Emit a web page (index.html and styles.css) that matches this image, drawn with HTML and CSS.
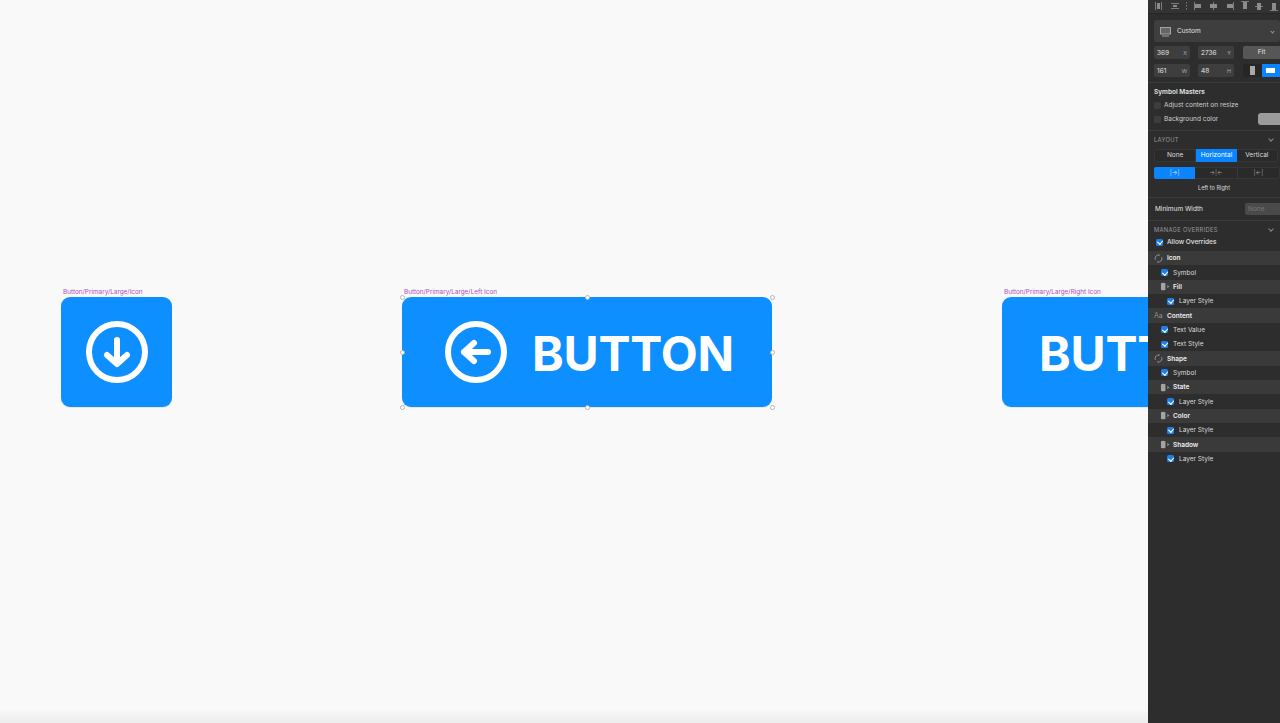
FILE: index.html
```html
<!DOCTYPE html>
<html>

<head>
    <title>Button Symbols</title>
    <meta name="viewport" content="width=device-width, initial-scale=1">
    <link rel="stylesheet" href="styles.css">
</head>

<body>
    <svg class="defs" width="0" height="0">
        <symbol id="sync" viewBox="0 0 10 10">
            <path d="M1.500 6.500A4 4 0 0 1 4 1.200M8.500 3.500A4 4 0 0 1 6 8.800" fill="none" stroke="#9a9a9a" stroke-width="1"/>
            <path d="M6 0L6 2.500L3.800 1.200ZM4 10L4 7.500L6.200 8.800Z" fill="#9a9a9a"/>
        </symbol>
        <symbol id="style" viewBox="0 0 11 10">
            <path d="M1 1.500Q3.500 0 6 1.500V8.500Q3.500 10 1 8.500Z" fill="#a4a4a4"/>
            <path d="M8 3L10.500 5L8 7Z" fill="#8a8a8a"/>
        </symbol>
    </svg>

    <div class="app">
        <div class="canvas">
            <div class="artboard-label label-icon">Button/Primary/Large/Icon</div>
            <div class="btn btn-icon">
                <svg class="circle-icon" viewBox="0 0 62 62">
                    <circle cx="31" cy="31" r="28" fill="none" stroke="#fff" stroke-width="6"/>
                    <path d="M31 19V42M21 34L31 43L41 34" fill="none" stroke="#fff" stroke-width="6" stroke-linecap="round" stroke-linejoin="round"/>
                </svg>
            </div>

            <div class="artboard-label label-left">Button/Primary/Large/Left Icon</div>
            <div class="btn btn-left">
                <svg class="circle-icon" viewBox="0 0 62 62">
                    <circle cx="31" cy="31" r="28" fill="none" stroke="#fff" stroke-width="6"/>
                    <path d="M43 31H19M29 22L19 31L29 40" fill="none" stroke="#fff" stroke-width="6" stroke-linecap="round" stroke-linejoin="round"/>
                </svg>
                <span class="btn-text">BUTTON</span>
            </div>
            <span class="handle h1"></span><span class="handle h2"></span><span class="handle h3"></span><span class="handle h4"></span>
            <span class="handle h5"></span><span class="handle h6"></span><span class="handle h7"></span><span class="handle h8"></span>

            <div class="artboard-label label-right">Button/Primary/Large/Right Icon</div>
            <div class="btn btn-right">
                <span class="btn-text">BUTTON</span>
            </div>
            <div class="canvas-fade"></div>
        </div>

        <div class="inspector">
            <div class="align-bar">
                <svg width="132" height="13" viewBox="0 0 132 13">
                    <g fill="none" stroke="#7c7c7c" stroke-width="1">
                        <path d="M7.500 2V10M13.500 2V10"/>
                        <path d="M23 3.500H31M23 8.500H31"/>
                        <path d="M38.500 2V10" stroke-dasharray="1.500 1.500"/>
                        <path d="M46.500 2V10"/>
                        <path d="M65.500 2V10"/>
                        <path d="M85.500 2V10"/>
                        <path d="M93 1.500H101"/>
                        <path d="M107 6.500H115"/>
                        <path d="M122 10.500H130"/>
                    </g>
                    <g fill="#8c8c8c">
                        <rect x="9" y="3" width="3" height="6"/>
                        <rect x="25" y="5" width="4" height="2"/>
                        <rect x="47" y="4" width="6" height="4"/>
                        <rect x="62" y="4" width="7" height="4"/>
                        <rect x="79" y="4" width="6" height="4"/>
                        <rect x="95" y="2" width="4" height="7"/>
                        <rect x="109" y="3" width="4" height="7"/>
                        <rect x="124" y="3" width="4" height="7"/>
                    </g>
                </svg>
            </div>

            <div class="preset">
                <svg class="preset-icon" width="13" height="11" viewBox="0 0 13 11">
                    <rect x="1.500" y="1.500" width="10" height="6.500" fill="#666" stroke="#a4a4a4"/>
                    <path d="M3 10H10" stroke="#a4a4a4"/>
                </svg>
                <span>Custom</span>
                <span class="chev"></span>
            </div>

            <div class="field-row">
                <div class="field"><span>369</span><small>X</small></div>
                <div class="field"><span>2736</span><small>Y</small></div>
                <div class="fit">Fit</div>
            </div>
            <div class="field-row">
                <div class="field"><span>161</span><small>W</small></div>
                <div class="field"><span>48</span><small>H</small></div>
                <div class="orient">
                    <div class="orient-item"><i class="portrait"></i></div>
                    <div class="orient-item on"><i class="landscape"></i></div>
                </div>
            </div>

            <div class="section masters">
                <div class="section-title">Symbol Masters</div>
                <div class="check-line"><span class="box"></span>Adjust content on resize</div>
                <div class="check-line"><span class="box"></span>Background color<span class="swatch"></span></div>
            </div>

            <div class="section layout">
                <div class="heading">LAYOUT<span class="caret"></span></div>
                <div class="segments">
                    <div class="seg">None</div>
                    <div class="seg on">Horizontal</div>
                    <div class="seg">Vertical</div>
                </div>
                <div class="segments dirs">
                    <div class="seg on">|&#8594;|</div>
                    <div class="seg">&#8594;|&#8592;</div>
                    <div class="seg">|&#8592;|</div>
                </div>
                <div class="seg-caption">Left to Right</div>
            </div>

            <div class="section min-width">
                <span>Minimum Width</span>
                <div class="min-input">None</div>
            </div>

            <div class="overrides">
                <div class="heading">MANAGE OVERRIDES<span class="caret"></span></div>
                <div class="allow"><span class="tick"></span>Allow Overrides</div>
                <div class="tree">
                    <div class="row head"><svg class="ico"><use href="#sync"/></svg>Icon</div>
                    <div class="row lvl1"><span class="tick"></span>Symbol</div>
                    <div class="row head sub"><svg class="ico"><use href="#style"/></svg>Fill</div>
                    <div class="row lvl2"><span class="tick"></span>Layer Style</div>
                    <div class="row head"><span class="aa">Aa</span>Content</div>
                    <div class="row lvl1"><span class="tick"></span>Text Value</div>
                    <div class="row lvl1"><span class="tick"></span>Text Style</div>
                    <div class="row head"><svg class="ico"><use href="#sync"/></svg>Shape</div>
                    <div class="row lvl1"><span class="tick"></span>Symbol</div>
                    <div class="row head sub"><svg class="ico"><use href="#style"/></svg>State</div>
                    <div class="row lvl2"><span class="tick"></span>Layer Style</div>
                    <div class="row head sub"><svg class="ico"><use href="#style"/></svg>Color</div>
                    <div class="row lvl2"><span class="tick"></span>Layer Style</div>
                    <div class="row head sub"><svg class="ico"><use href="#style"/></svg>Shadow</div>
                    <div class="row lvl2"><span class="tick"></span>Layer Style</div>
                </div>
            </div>
        </div>
    </div>
</body>

</html>
```

FILE: styles.css
```css
* {
    box-sizing: border-box;
}

body {
    font-family: "Inter", "Liberation Sans", sans-serif;
    margin: 0;
    padding: 0;
    overflow: hidden;
}

.defs {
    position: absolute;
}

.app {
    display: flex;
    width: 1280px;
    height: 723px;
    overflow: hidden;
}

/* Free canvas: artboards sit at their own coordinates */

.canvas {
    position: relative;
    flex: 1;
    background-color: #f9f9f9;
    overflow: hidden;
}

.canvas-fade {
    position: absolute;
    left: 0;
    right: 0;
    bottom: 0;
    height: 14px;
    background: linear-gradient(#f9f9f9, #ededed);
}

.artboard-label {
    position: absolute;
    top: 288px;
    font-size: 6.4px;
    line-height: 8px;
    color: #a94fc0;
    white-space: nowrap;
}

.label-icon {
    left: 63px;
}

.label-left {
    left: 404px;
}

.label-right {
    left: 1004px;
}

.btn {
    position: absolute;
    top: 297px;
    height: 110px;
    background-color: #0d8fff;
    border-radius: 9px;
    display: flex;
    align-items: center;
    box-shadow: 0 1px 1px rgba(0, 0, 0, 0.08);
}

.btn-icon {
    left: 61px;
    width: 111px;
    justify-content: center;
}

.btn-left {
    left: 402px;
    width: 370px;
    padding-left: 43px;
}

.btn-right {
    left: 1002px;
    width: 370px;
    padding-left: 37px;
}

.circle-icon {
    width: 62px;
    height: 62px;
    flex: none;
}

.btn-text {
    margin-top: 3px;
    font-size: 48px;
    font-weight: 700;
    line-height: 56px;
    color: #fff;
    letter-spacing: -0.2px;
}

.btn-left .btn-text {
    margin-left: 25px;
}

.handle {
    position: absolute;
    width: 5px;
    height: 5px;
    background-color: #fff;
    border: 1px solid #b5b5b5;
    border-radius: 50%;
}

.h1 { left: 400px; top: 295px; }
.h2 { left: 585px; top: 295px; }
.h3 { left: 770px; top: 295px; }
.h4 { left: 400px; top: 350px; }
.h5 { left: 770px; top: 350px; }
.h6 { left: 400px; top: 405px; }
.h7 { left: 585px; top: 405px; }
.h8 { left: 770px; top: 405px; }

/* Inspector */

.inspector {
    width: 132px;
    flex: none;
    height: 723px;
    background-color: #2d2d2d;
    color: #e4e4e4;
    font-size: 6.5px;
    line-height: 8px;
    overflow: hidden;
}

.align-bar {
    height: 14px;
    background-color: #333;
    border-bottom: 1px solid #262626;
}

.align-bar svg {
    display: block;
}

.preset {
    display: flex;
    align-items: center;
    height: 22px;
    margin: 6px 0 4px 6px;
    padding: 0 5px;
    background-color: #3e3e3e;
    border-radius: 3px;
}

.preset-icon {
    margin-right: 5px;
}

.chev {
    width: 3px;
    height: 3px;
    margin-left: auto;
    margin-right: 1px;
    border-right: 1px solid #999;
    border-bottom: 1px solid #999;
    transform: rotate(45deg);
}

.field-row {
    display: flex;
    align-items: center;
    height: 13px;
    margin: 0 0 5px 6px;
}

.field {
    display: flex;
    justify-content: space-between;
    align-items: center;
    width: 36px;
    height: 13px;
    margin-right: 8px;
    padding: 0 3px;
    background-color: #3e3e3e;
    border-radius: 2px;
}

.field small {
    font-size: 5.4px;
    color: #aaa;
}

.fit {
    flex: 1;
    height: 13px;
    margin-left: 1px;
    line-height: 13px;
    text-align: center;
    background-color: #565656;
    border-radius: 2px 0 0 2px;
}

.orient {
    flex: 1;
    display: flex;
    height: 13px;
    margin-left: 1px;
}

.orient-item {
    flex: 1;
    display: flex;
    align-items: center;
    justify-content: center;
    background-color: #262626;
    border-radius: 2px 0 0 2px;
}

.orient-item.on {
    background-color: #0a84ff;
    border-radius: 0;
}

.portrait {
    width: 5px;
    height: 9px;
    background-color: #a8a8a8;
}

.landscape {
    width: 9px;
    height: 5px;
    background-color: #fff;
}

.section {
    border-top: 1px solid #3a3a3a;
}

.masters {
    height: 48px;
    padding-top: 5px;
}

.section-title {
    margin-left: 6px;
    height: 10px;
    line-height: 8px;
    font-weight: 600;
}

.check-line {
    display: flex;
    align-items: center;
    height: 14px;
    padding-left: 6px;
    color: #cfcfcf;
}

.box {
    width: 7px;
    height: 7px;
    margin-right: 3px;
    background-color: #3d3d3d;
    border-radius: 1.5px;
}

.swatch {
    width: 22px;
    height: 12px;
    margin-left: auto;
    background-color: #9b9b9b;
    border-radius: 3px 0 0 3px;
}

.layout {
    height: 67px;
    padding-top: 5px;
}

.heading {
    display: flex;
    justify-content: space-between;
    align-items: center;
    height: 8px;
    padding: 0 6px;
    font-size: 5.8px;
    letter-spacing: 0.3px;
    color: #9a9a9a;
}

.caret {
    width: 4px;
    height: 4px;
    margin-top: -2px;
    margin-right: 1px;
    border-right: 1px solid #8a8a8a;
    border-bottom: 1px solid #8a8a8a;
    transform: rotate(45deg);
}

.segments {
    display: flex;
    height: 13px;
    margin: 5px 2px 0 6px;
    background-color: #2a2a2a;
    border: 1px solid #363636;
    border-radius: 2px;
}

.seg {
    flex: 1;
    line-height: 11px;
    text-align: center;
    color: #ddd;
    border-right: 1px solid #383838;
}

.seg:last-child {
    border-right: 0;
}

.seg.on {
    margin: -1px 0;
    line-height: 13px;
    background-color: #0a84ff;
    color: #fff;
    border-right: 0;
}

.dirs {
    height: 12px;
    margin-right: 0;
}

.dirs .seg {
    line-height: 10px;
    font-size: 6px;
    color: #999;
}

.dirs .seg.on {
    margin-left: -1px;
    line-height: 12px;
    color: #cfe6ff;
    border-radius: 2px 0 0 2px;
}

.seg-caption {
    margin-top: 5px;
    text-align: center;
    font-size: 5.6px;
    color: #ddd;
}

.min-width {
    display: flex;
    justify-content: space-between;
    align-items: center;
    height: 23px;
    padding-left: 7px;
}

.min-input {
    width: 35px;
    height: 12px;
    padding-left: 3px;
    line-height: 12px;
    color: #777;
    background-color: #4a4a4a;
    border-radius: 2px 0 0 2px;
}

.overrides {
    padding-top: 5px;
    border-top: 1px solid #3a3a3a;
}

.allow {
    display: flex;
    align-items: center;
    height: 16px;
    padding-left: 8px;
    font-weight: 500;
}

.tick {
    position: relative;
    flex: none;
    width: 7px;
    height: 7px;
    margin-right: 4px;
    background-color: #1f7fe6;
    border-radius: 1.5px;
}

.tick::after {
    content: "";
    position: absolute;
    left: 2.2px;
    top: 0.6px;
    width: 2.6px;
    height: 4.4px;
    border-right: 1.2px solid #fff;
    border-bottom: 1.2px solid #fff;
    transform: rotate(40deg);
}

.tree {
    display: grid;
    grid-auto-rows: 14.35px;
    margin-top: 1px;
}

.tree .tick {
    margin-right: 5px;
}

.row {
    display: flex;
    align-items: center;
    color: #dcdcdc;
}

.row.head {
    padding-left: 6px;
    font-weight: 600;
    color: #eee;
    background-color: #3a3a3a;
}

.row.head.sub {
    padding-left: 12px;
}

.lvl1 {
    padding-left: 13px;
}

.lvl2 {
    padding-left: 19px;
}

.ico {
    flex: none;
    width: 9px;
    height: 9px;
    margin-right: 4px;
}

.row.sub .ico {
    width: 10px;
    margin-right: 3px;
}

.aa {
    flex: none;
    width: 11px;
    margin-right: 2px;
    font-size: 7px;
    font-weight: 400;
    color: #8e8e8e;
}
```
